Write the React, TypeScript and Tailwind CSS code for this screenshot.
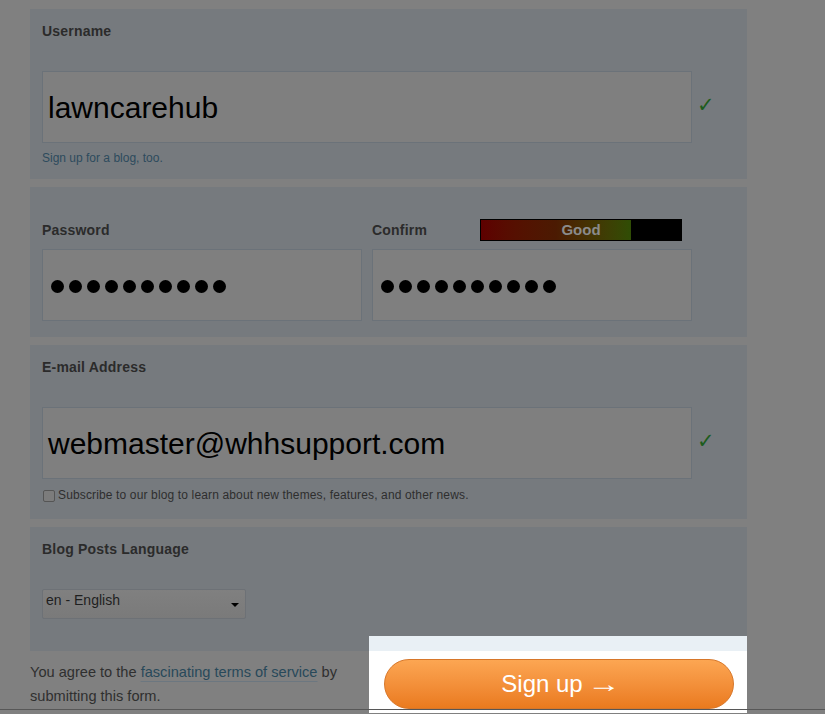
const Dots = () => (
  <div className="flex gap-[5px] pl-[8px] pt-[3px]">
    {Array.from({ length: 10 }).map((_, i) => (
      <span key={i} className="block h-[13px] w-[13px] rounded-full bg-black" />
    ))}
  </div>
);

const Check = () => (
  <span className="ml-[5px] -mt-[4px] font-['DejaVu_Sans',sans-serif] text-[21px] leading-none text-[#1d5c1d]">✓</span>
);

const Label = ({ children }: { children: React.ReactNode }) => (
  <label className="block text-[14px] font-bold leading-[16px] tracking-[0.2px] text-[#2b2b2b]">{children}</label>
);

export default function App() {
  return (
    <div className="relative h-[714px] w-[825px] overflow-hidden bg-[#808080] font-['Liberation_Sans',Arial,sans-serif]">
      <div className="ml-[30px] flex w-[717px] flex-col gap-[8px] pt-[9px]">
        {/* Username */}
        <section className="bg-[#767a7e] px-[12px] pb-[13px] pt-[14px]">
          <Label>Username</Label>
          <div className="mt-[32px] flex items-center">
            <div className="flex h-[72px] w-[650px] items-center border border-[#6b7279] bg-[#7f7f7f] pl-[5px] text-[30px] text-black">
              lawncarehub
            </div>
            <Check />
          </div>
          <a className="mt-[8px] block text-[12px] leading-[15px] text-[#2d4b5d]">Sign up for a blog, too.</a>
        </section>

        {/* Password */}
        <section className="flex gap-[10px] bg-[#767a7e] px-[12px] pb-[16px] pt-[32px]">
          <div className="w-[320px]">
            <div className="flex h-[22px] items-center">
              <Label>Password</Label>
            </div>
            <div className="mt-[8px] flex h-[72px] items-center border border-[#6b7279] bg-[#7f7f7f]">
              <Dots />
            </div>
          </div>
          <div className="w-[320px]">
            <div className="flex h-[22px] items-center">
              <div className="w-[108px]">
                <Label>Confirm</Label>
              </div>
              <div className="relative flex h-[22px] w-[202px] border border-black bg-black">
                <div className="h-full w-[150px] bg-linear-to-r from-[#5e0000] via-[#4b1a02] to-[#2f4d05]" />
                <span className="absolute inset-0 flex items-center justify-center text-[15px] font-bold text-[#8b8b8b]">
                  Good
                </span>
              </div>
            </div>
            <div className="mt-[8px] flex h-[72px] items-center border border-[#6b7279] bg-[#7f7f7f]">
              <Dots />
            </div>
          </div>
        </section>

        {/* Email */}
        <section className="bg-[#767a7e] px-[12px] pb-[17px] pt-[14px]">
          <Label>E-mail Address</Label>
          <div className="mt-[32px] flex items-center">
            <div className="flex h-[72px] w-[650px] items-center border border-[#6b7279] bg-[#7f7f7f] pl-[5px] text-[30px] text-black">
              webmaster@whhsupport.com
            </div>
            <Check />
          </div>
          <div className="mt-[10px] flex h-[13px] items-center gap-[3px]">
            <span className="ml-[1px] block h-[12px] w-[12px] rounded-[2px] border border-[#555] bg-[#7c7c7c]" />
            <span className="text-[12px] leading-[13px] tracking-[0.14px] text-[#2e2e2e]">
              Subscribe to our blog to learn about new themes, features, and other news.
            </span>
          </div>
        </section>

        {/* Language */}
        <section className="bg-[#767a7e] px-[12px] pb-[32px] pt-[14px]">
          <Label>Blog Posts Language</Label>
          <div className="relative mt-[32px] h-[30px] w-[204px] rounded-[2px] border border-[#6d7176] bg-linear-to-b from-[#808080] to-[#7a7a7a] pl-[3px] pt-[1px] text-[14px] leading-[18px] text-[#1f1f1f]">
            en - English
            <span className="absolute right-[6px] top-[13px] h-0 w-0 border-x-[4px] border-t-[4px] border-x-transparent border-t-black" />
          </div>
        </section>

        {/* Agreement + submit */}
        <div className="-mt-[23px] flex">
          <p className="w-[340px] pt-[24px] text-[14.6px] leading-[24px] text-[#2f2f2f]">
            You agree to the{" "}
            <a className="text-[#28495a] underline decoration-[#6c7780] underline-offset-[4px]">
              fascinating terms of service
            </a>{" "}
            by submitting this form.
          </p>
          <div className="flex w-[378px] flex-col">
            <div className="h-[15px] bg-[#e9f0f5]" />
            <div className="h-[62px] bg-white px-[15px] pt-[8px]">
              <button className="flex h-[50px] w-[350px] items-center justify-center rounded-full border border-[#d7772a] bg-linear-to-b from-[#fca652] to-[#ea7a1d] pr-[6px] text-[24px] text-white">
                Sign up
                <span className="ml-[4px] inline-block origin-left scale-x-[1.4]">→</span>
              </button>
            </div>
          </div>
        </div>
      </div>
      <div className="absolute left-0 right-0 top-[709px] h-[1px] bg-[#575757]" />
    </div>
  );
}
